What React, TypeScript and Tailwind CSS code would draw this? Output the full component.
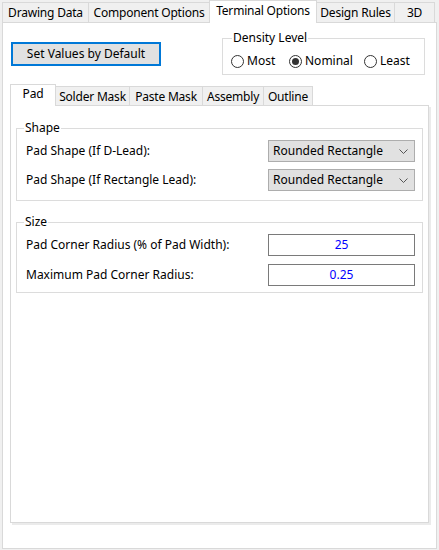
import React from 'react';

const font = { fontFamily: '"Noto Sans", "Liberation Sans", sans-serif' };

const Tab = ({ label, active, className }: { label: string; active?: boolean; className: string }) => (
  <div
    className={`flex items-center justify-center border border-b-0 border-[#d9d9d9] leading-none tracking-[-0.2px] ${
      active ? 'relative z-10 bg-white -mb-px pb-[3px]' : 'bg-[#f0f0f0] pt-[1px]'
    } ${className}`}
  >
    {label}
  </div>
);

const Radio = ({ label, checked, className }: { label: string; checked?: boolean; className: string }) => (
  <div className={`flex items-center gap-[3px] ${className}`}>
    <span className="w-[13px] h-[13px] rounded-full border border-[#333] bg-white flex items-center justify-center">
      {checked && <span className="w-[7px] h-[7px] rounded-full bg-[#333]" />}
    </span>
    <span>{label}</span>
  </div>
);

const Combo = ({ value }: { value: string }) => (
  <div className="w-[147px] h-[22px] bg-[#e1e1e1] border border-[#adadad] flex items-center justify-between pl-[4px] pr-[6px]">
    <span>{value}</span>
    <svg width="9" height="5" viewBox="0 0 9 5" fill="none">
      <path d="M0.5 0.5 L4.5 4.5 L8.5 0.5" stroke="#555" strokeWidth="1" />
    </svg>
  </div>
);

const ValueBox = ({ value }: { value: string }) => (
  <div className="w-[147px] h-[22px] bg-white border border-[#7a7a7a] flex items-center justify-center text-[#0000ff]">
    {value}
  </div>
);

const Row = ({ label, children }: { label: string; children: React.ReactNode }) => (
  <div className="flex items-center justify-between">
    <span>{label}</span>
    {children}
  </div>
);

export default function App() {
  return (
    <div className="w-[439px] h-[550px] bg-[#f0f0f0] overflow-hidden text-[12px] text-black" style={font}>
      {/* Outer tabs */}
      <div className="flex items-end h-[22px] pl-[2px]">
        <Tab label="Drawing Data" className="w-[87px] h-[20px]" />
        <Tab label="Component Options" className="w-[122px] h-[20px] -ml-px" />
        <Tab label="Terminal Options" active className="w-[108px] h-[23px] -ml-px" />
        <Tab label="Design Rules" className="w-[79px] h-[20px] -ml-px" />
        <Tab label="3D" className="w-[41px] h-[20px] -ml-px" />
      </div>

      <div className="ml-[2px] w-[435px] h-[527px] border border-[#d9d9d9] bg-white">
        {/* Top row */}
        <div className="flex justify-between items-start pl-[8px] pr-[11px] pt-[15px]">
          <button className="mt-[4px] w-[150px] h-[24px] bg-[#e1e1e1] border-2 border-[#0078d7] flex items-center justify-center">
            Set Values by Default
          </button>
          <div className="relative w-[203px] h-[37px] border border-[#dcdcdc]">
            <span className="absolute left-[9px] -top-[9px] bg-white px-[1px] leading-[15px]">Density Level</span>
            <div className="flex items-center pl-[8px] pt-[13px]">
              <Radio label="Most" className="w-[58px]" />
              <Radio label="Nominal" checked className="w-[75px]" />
              <Radio label="Least" className="w-[50px]" />
            </div>
          </div>
        </div>

        {/* Inner tabs */}
        <div className="mt-[9px] ml-[7px]">
          <div className="flex items-end h-[21px]">
            <Tab label="Pad" active className="w-[46px] h-[22px]" />
            <Tab label="Solder Mask" className="w-[75px] h-[19px] -ml-px" />
            <Tab label="Paste Mask" className="w-[74px] h-[19px] -ml-px" />
            <Tab label="Assembly" className="w-[62px] h-[19px] -ml-px" />
            <Tab label="Outline" className="w-[50px] h-[19px] -ml-px" />
          </div>

          <div className="w-[419px] h-[418px] border border-[#d9d9d9] shadow-[2px_2px_0_0_#ebebeb] pl-[5px]">
            {/* Shape */}
            <div className="relative mt-[22px] w-[407px] h-[73px] border border-[#dcdcdc] pl-[9px] pr-[7px] pt-[11px]">
              <span className="absolute left-[7px] -top-[9px] bg-white px-[1px] leading-[15px]">Shape</span>
              <div className="flex flex-col gap-[7px]">
                <Row label="Pad Shape (If D-Lead):">
                  <Combo value="Rounded Rectangle" />
                </Row>
                <Row label="Pad Shape (If Rectangle Lead):">
                  <Combo value="Rounded Rectangle" />
                </Row>
              </div>
            </div>

            {/* Size */}
            <div className="relative mt-[21px] w-[407px] h-[71px] border border-[#dcdcdc] pl-[9px] pr-[7px] pt-[11px]">
              <span className="absolute left-[7px] -top-[9px] bg-white px-[1px] leading-[15px]">Size</span>
              <div className="flex flex-col gap-[8px]">
                <Row label="Pad Corner Radius (% of Pad Width):">
                  <ValueBox value="25" />
                </Row>
                <Row label="Maximum Pad Corner Radius:">
                  <ValueBox value="0.25" />
                </Row>
              </div>
            </div>
          </div>
        </div>
      </div>
    </div>
  );
}
